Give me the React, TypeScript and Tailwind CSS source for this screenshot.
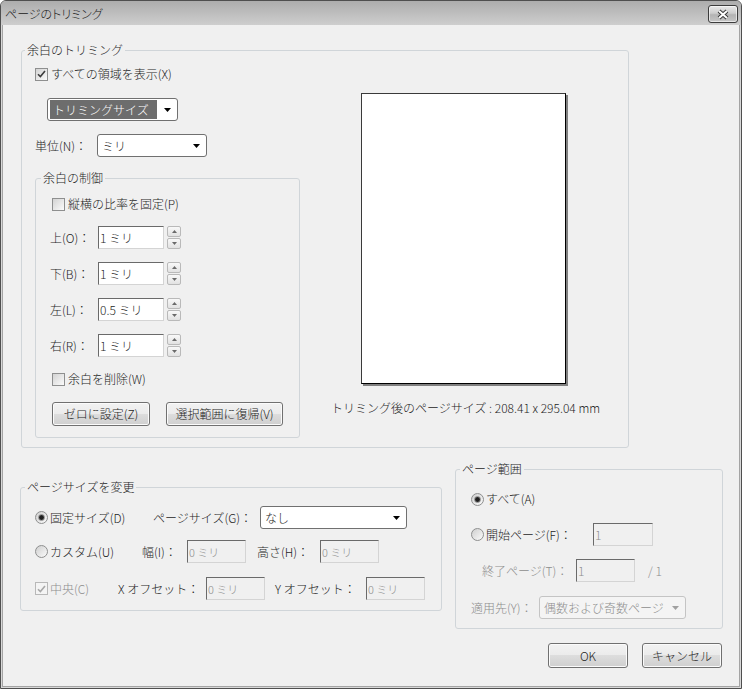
import type { ReactNode } from "react";

function Check({ checked = false, disabled = false }: { checked?: boolean; disabled?: boolean }) {
  return (
    <span
      className={`flex h-[13px] w-[13px] shrink-0 items-center justify-center border ${
        disabled ? "border-[#b8b8b8] bg-[#f4f4f4]" : "border-[#8e8f8f] bg-linear-to-br from-[#d3d3d3] to-[#fbfbfb]"
      }`}
    >
      {checked && (
        <svg width="9" height="8" viewBox="0 0 9 8">
          <path d="M1 4.2 L3.4 6.6 L8 1" fill="none" stroke={disabled ? "#a8a8a8" : "#3d3d3d"} strokeWidth="1.6" />
        </svg>
      )}
    </span>
  );
}

function Radio({ checked = false }: { checked?: boolean }) {
  return (
    <span className="flex h-[13px] w-[13px] shrink-0 items-center justify-center rounded-full border border-[#8e8f8f] bg-linear-to-br from-[#cfcfcf] to-[#fbfbfb]">
      {checked && (
        <span className="h-[7px] w-[7px] rounded-full border border-[#8a8a8a] bg-[radial-gradient(circle,#1f1f1f_45%,#5f5f5f)]" />
      )}
    </span>
  );
}

function Combo({
  className = "",
  children,
  highlight = false,
  disabled = false,
}: {
  className?: string;
  children: ReactNode;
  highlight?: boolean;
  disabled?: boolean;
}) {
  return (
    <div
      className={`flex h-[23px] shrink-0 items-center rounded-[3px] border ${
        disabled ? "border-[#c4c4c4] bg-[#f4f4f4] text-[#8d8d8d]" : "border-[#707070] bg-white text-[#1e1e1e]"
      } ${className}`}
    >
      {highlight ? (
        <span className="ml-[2px] flex h-[19px] flex-1 items-center bg-[#6d6d6d] pl-[3px] text-white">{children}</span>
      ) : (
        <span className="flex-1 overflow-hidden whitespace-nowrap pl-[4px]">{children}</span>
      )}
      <span className="flex w-[20px] shrink-0 justify-center">
        <svg width="7" height="4" viewBox="0 0 7 4">
          <path d="M0 0H7L3.5 4Z" fill={disabled ? "#a0a0a0" : "#000"} />
        </svg>
      </span>
    </div>
  );
}

function Field({
  className = "",
  value,
  disabled = false,
  small = false,
}: {
  className?: string;
  value: string;
  disabled?: boolean;
  small?: boolean;
}) {
  return (
    <div
      className={`flex h-[23px] shrink-0 items-center border border-t-[#6a6a6a] border-l-[#6a6a6a] border-r-[#d4d4d4] border-b-[#d4d4d4] pl-[1px] ${
        disabled ? "bg-[#f0f0f0] text-[#8d8d8d]" : "bg-white text-[#1e1e1e]"
      } ${small ? "text-[11px]" : "text-[12px]"} ${className}`}
    >
      {value}
    </div>
  );
}

function Spinner() {
  return (
    <div className="ml-[3px] flex h-[23px] w-[14px] flex-col gap-[1px]">
      <div className="flex flex-1 items-center justify-center rounded-[2px] border border-[#b9b9b9] bg-linear-to-b from-[#f8f8f8] to-[#e2e2e2]">
        <svg width="5" height="3" viewBox="0 0 5 3">
          <path d="M0 3H5L2.5 0Z" fill="#6a6a6a" />
        </svg>
      </div>
      <div className="flex flex-1 items-center justify-center rounded-[2px] border border-[#b9b9b9] bg-linear-to-b from-[#f8f8f8] to-[#e2e2e2]">
        <svg width="5" height="3" viewBox="0 0 5 3">
          <path d="M0 0H5L2.5 3Z" fill="#6a6a6a" />
        </svg>
      </div>
    </div>
  );
}

function SpinRow({ label, value, className = "" }: { label: string; value: string; className?: string }) {
  return (
    <div className={`flex h-[23px] items-center ${className}`}>
      <span className="w-[48px]">{label}</span>
      <Field className="w-[66px]" value={value} />
      <Spinner />
    </div>
  );
}

function Btn({ className = "", children }: { className?: string; children: ReactNode }) {
  return (
    <button
      type="button"
      className={`flex items-center justify-center rounded-[3px] border border-[#707070] bg-[linear-gradient(#f2f2f2,#ebebeb_50%,#dddddd_50%,#cfcfcf)] text-[#1e1e1e] shadow-[inset_0_0_0_1px_#fbfbfb] ${className}`}
    >
      {children}
    </button>
  );
}

function Group({
  title,
  className = "",
  legendClass = "ml-[4px]",
  children,
}: {
  title: string;
  className?: string;
  legendClass?: string;
  children: ReactNode;
}) {
  return (
    <fieldset className={`shrink-0 rounded-[3px] border border-[#d0d5d9] ${className}`}>
      <legend className={`px-[2px] leading-[16px] ${legendClass}`}>{title}</legend>
      {children}
    </fieldset>
  );
}

export default function App() {
  return (
    <div className="flex h-[689px] w-[742px] flex-col overflow-hidden rounded-t-[6px] border border-[#4f4f4f] bg-[#d8d8d8] font-['Noto_Sans_CJK_JP','Noto_Sans',sans-serif] text-[12px] font-light leading-[16px] text-[#1e1e1e]">
      {/* Title bar */}
      <div className="flex h-[24px] shrink-0 items-center justify-between bg-linear-to-b from-[#adadad] to-[#cecece] pl-[4px] pr-[3px]">
        <span className="mt-[2px] text-[#202020] [font-feature-settings:'palt']">ページのトリミング</span>
        <button
          type="button"
          className="mt-[2px] flex h-[18px] w-[30px] items-center justify-center rounded-[3px] border border-[#3c3c3c] bg-[linear-gradient(#e9e9e9,#cdcdcd_45%,#b3b3b3_55%,#c6c6c6)] shadow-[inset_0_0_0_1px_rgba(255,255,255,0.6)]"
        >
          <svg width="14" height="11" viewBox="0 0 14 11">
            <path d="M3 2 L11 9 M11 2 L3 9" stroke="#3a3a3a" strokeWidth="4" />
            <path d="M3 2 L11 9 M11 2 L3 9" stroke="#fff" strokeWidth="2" />
          </svg>
        </button>
      </div>

      {/* Body */}
      <div className="mx-[1px] mb-[1px] flex flex-1 flex-col border-x border-b border-[#a4a4a4] bg-[#f0f0f0] px-[17px] pt-[17px]">
        {/* Trim margins */}
        <Group title="余白のトリミング" className="ml-[1px] w-[608px] pb-[9px]" legendClass="ml-[3px]">
          <div className="flex">
            <div className="flex flex-col pl-[13px]">
              <label className="mt-[8px] flex h-[16px] items-center gap-[3px]">
                <Check checked />
                すべての領域を表示(X)
              </label>
              <Combo className="ml-[12px] mt-[16px] w-[131px]" highlight>
                トリミングサイズ
              </Combo>
              <div className="mt-[13px] flex items-center">
                <span className="w-[62px]">単位(N)：</span>
                <Combo className="w-[110px]">ミリ</Combo>
              </div>

              <Group title="余白の制御" className="mt-[13px] w-[265px] pb-[11px]" legendClass="ml-[5px]">
                <div className="flex flex-col pl-[14px]">
                  <label className="ml-[2px] mt-[10px] flex h-[16px] items-center gap-[3px]">
                    <Check />
                    縦横の比率を固定(P)
                  </label>
                  <SpinRow label="上(O)：" value="1 ミリ" className="mt-[14px]" />
                  <SpinRow label="下(B)：" value="1 ミリ" className="mt-[13px]" />
                  <SpinRow label="左(L)：" value="0.5 ミリ" className="mt-[13px]" />
                  <SpinRow label="右(R)：" value="1 ミリ" className="mt-[13px]" />
                  <label className="ml-[2px] mt-[14px] flex h-[16px] items-center gap-[3px]">
                    <Check />
                    余白を削除(W)
                  </label>
                  <div className="ml-[2px] mt-[15px] flex gap-[16px]">
                    <Btn className="h-[24px] w-[98px]">ゼロに設定(Z)</Btn>
                    <Btn className="h-[24px] w-[117px]">選択範囲に復帰(V)</Btn>
                  </div>
                </div>
              </Group>
            </div>

            {/* Preview */}
            <div className="ml-[31px] flex flex-col">
              <div className="ml-[30px] mt-[35px] h-[291px] w-[205px] border border-[#3a3a3a] border-b-black border-r-black bg-white shadow-[2px_2px_0_#808080]" />
              <div className="mt-[16px] whitespace-nowrap">トリミング後のページサイズ : 208.41 x 295.04 mm</div>
            </div>
          </div>
        </Group>

        <div className="flex items-start">
          {/* Change page size */}
          <Group title="ページサイズを変更" className="mt-[31px] w-[422px] pb-[10px]">
            <div className="flex flex-col pl-[14px]">
              <div className="mt-[11px] flex h-[23px] items-center">
                <label className="flex w-[118px] items-center gap-[2px]">
                  <Radio checked />
                  固定サイズ(D)
                </label>
                <span className="w-[107px]">ページサイズ(G)：</span>
                <Combo className="w-[147px]">なし</Combo>
              </div>
              <div className="mt-[11px] flex h-[23px] items-center">
                <label className="flex w-[107px] items-center gap-[2px]">
                  <Radio />
                  カスタム(U)
                </label>
                <span className="w-[45px]">幅(I)：</span>
                <Field disabled small className="w-[59px]" value="0 ミリ" />
                <span className="ml-[11px] w-[63px]">高さ(H)：</span>
                <Field disabled small className="w-[59px]" value="0 ミリ" />
              </div>
              <div className="mt-[14px] flex h-[23px] items-center">
                <label className="flex w-[83px] items-center gap-[2px] text-[#8d8d8d]">
                  <Check checked disabled />
                  中央(C)
                </label>
                <span className="w-[88px]">X オフセット：</span>
                <Field disabled small className="w-[59px]" value="0 ミリ" />
                <span className="ml-[10px] w-[91px]">Y オフセット：</span>
                <Field disabled small className="w-[59px]" value="0 ミリ" />
              </div>
            </div>
          </Group>

          {/* Page range */}
          <Group title="ページ範囲" className="ml-[13px] mt-[13px] w-[268px] pb-[9px]">
            <div className="flex flex-col pl-[15px]">
              <label className="mt-[14px] flex h-[16px] items-center gap-[2px]">
                <Radio checked />
                すべて(A)
              </label>
              <div className="mt-[16px] flex h-[23px] items-center">
                <label className="flex w-[122px] items-center gap-[2px]">
                  <Radio />
                  開始ページ(F)：
                </label>
                <Field disabled className="w-[60px]" value="1" />
              </div>
              <div className="ml-[11px] mt-[13px] flex h-[23px] items-center text-[#8d8d8d]">
                <span className="w-[94px]">終了ページ(T)：</span>
                <Field disabled className="w-[59px]" value="1" />
                <span className="ml-[13px]">/ 1</span>
              </div>
              <div className="mt-[14px] flex h-[23px] items-center text-[#8d8d8d]">
                <span className="w-[68px]">適用先(Y)：</span>
                <Combo disabled className="w-[147px]">
                  偶数および奇数ページ
                </Combo>
              </div>
            </div>
          </Group>
        </div>

        <div className="mt-[14px] flex justify-end gap-[14px]">
          <Btn className="h-[25px] w-[80px]">OK</Btn>
          <Btn className="h-[25px] w-[80px]">キャンセル</Btn>
        </div>
      </div>
    </div>
  );
}
